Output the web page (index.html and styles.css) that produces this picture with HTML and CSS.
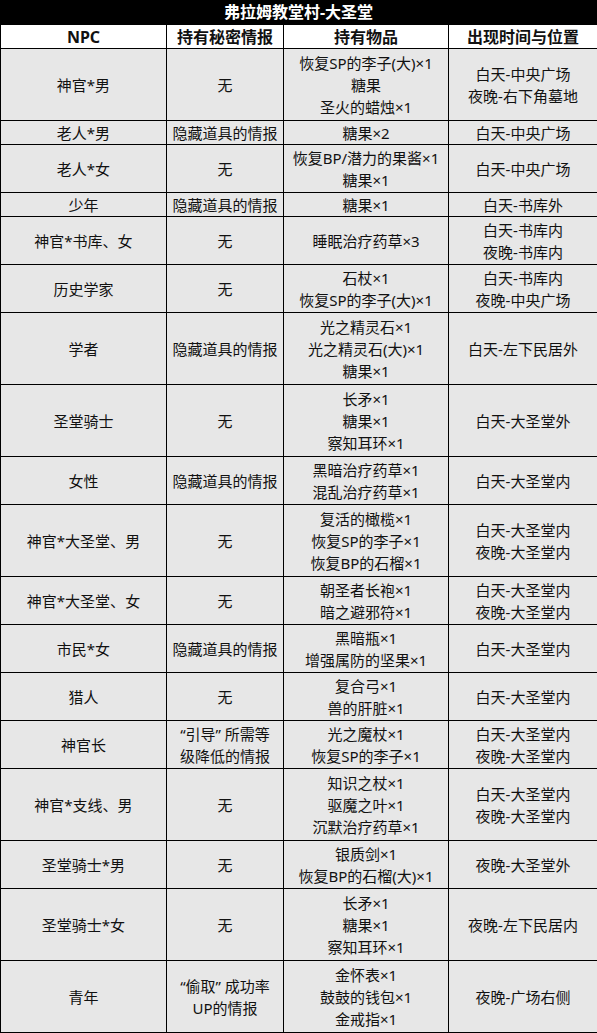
FILE: index.html
```html
<!DOCTYPE html>
<html lang="zh-CN">
<head>
<meta charset="utf-8">
<title>弗拉姆教堂村-大圣堂</title>
<link rel="stylesheet" href="styles.css">
</head>
<body>
<div class="sheet">
  <div class="title">弗拉姆教堂村-大圣堂</div>
  <table class="grid">
    <colgroup>
      <col class="c-npc">
      <col class="c-info">
      <col class="c-item">
      <col class="c-time">
    </colgroup>
    <thead>
      <tr class="head">
        <th>NPC</th><th>持有秘密情报</th><th>持有物品</th><th>出现时间与位置</th>
      </tr>
    </thead>
    <tbody>
      <tr class="r3"><td>神官*男</td><td>无</td><td>恢复SP的李子(大)×1<br>糖果<br>圣火的蜡烛×1</td><td>白天-中央广场<br>夜晚-右下角墓地</td></tr>
      <tr class="r1"><td>老人*男</td><td>隐藏道具的情报</td><td>糖果×2</td><td>白天-中央广场</td></tr>
      <tr class="r2"><td>老人*女</td><td>无</td><td>恢复BP/潜力的果酱×1<br>糖果×1</td><td>白天-中央广场</td></tr>
      <tr class="r1"><td>少年</td><td>隐藏道具的情报</td><td>糖果×1</td><td>白天-书库外</td></tr>
      <tr class="r2"><td>神官*书库、女</td><td>无</td><td>睡眠治疗药草×3</td><td>白天-书库内<br>夜晚-书库内</td></tr>
      <tr class="r2"><td>历史学家</td><td>无</td><td>石杖×1<br>恢复SP的李子(大)×1</td><td>白天-书库内<br>夜晚-中央广场</td></tr>
      <tr class="r3"><td>学者</td><td>隐藏道具的情报</td><td>光之精灵石×1<br>光之精灵石(大)×1<br>糖果×1</td><td>白天-左下民居外</td></tr>
      <tr class="r3"><td>圣堂骑士</td><td>无</td><td>长矛×1<br>糖果×1<br>察知耳环×1</td><td>白天-大圣堂外</td></tr>
      <tr class="r2"><td>女性</td><td>隐藏道具的情报</td><td>黑暗治疗药草×1<br>混乱治疗药草×1</td><td>白天-大圣堂内</td></tr>
      <tr class="r3"><td>神官*大圣堂、男</td><td>无</td><td>复活的橄榄×1<br>恢复SP的李子×1<br>恢复BP的石榴×1</td><td>白天-大圣堂内<br>夜晚-大圣堂内</td></tr>
      <tr class="r2"><td>神官*大圣堂、女</td><td>无</td><td>朝圣者长袍×1<br>暗之避邪符×1</td><td>白天-大圣堂内<br>夜晚-大圣堂内</td></tr>
      <tr class="r2"><td>市民*女</td><td>隐藏道具的情报</td><td>黑暗瓶×1<br>增强属防的坚果×1</td><td>白天-大圣堂内</td></tr>
      <tr class="r2"><td>猎人</td><td>无</td><td>复合弓×1<br>兽的肝脏×1</td><td>白天-大圣堂内</td></tr>
      <tr class="r2"><td>神官长</td><td>“引导” 所需等<br>级降低的情报</td><td>光之魔杖×1<br>恢复SP的李子×1</td><td>白天-大圣堂内<br>夜晚-大圣堂内</td></tr>
      <tr class="r3"><td>神官*支线、男</td><td>无</td><td>知识之杖×1<br>驱魔之叶×1<br>沉默治疗药草×1</td><td>白天-大圣堂内<br>夜晚-大圣堂内</td></tr>
      <tr class="r2"><td>圣堂骑士*男</td><td>无</td><td>银质剑×1<br>恢复BP的石榴(大)×1</td><td>夜晚-大圣堂外</td></tr>
      <tr class="r3"><td>圣堂骑士*女</td><td>无</td><td>长矛×1<br>糖果×1<br>察知耳环×1</td><td>夜晚-左下民居内</td></tr>
      <tr class="r3"><td>青年</td><td>“偷取” 成功率<br>UP的情报</td><td>金怀表×1<br>鼓鼓的钱包×1<br>金戒指×1</td><td>夜晚-广场右侧</td></tr>
    </tbody>
  </table>
</div>
</body>
</html>
```

FILE: styles.css
```css
html, body {
  margin: 0;
  padding: 0;
  background: #ffffff;
}

.sheet {
  width: 597px;
  font-family: "Noto Sans", "Noto Sans CJK SC", sans-serif;
  color: #111111;
}

.title {
  height: 24px;
  line-height: 24px;
  background: #000000;
  color: #ffffff;
  font-weight: 700;
  font-size: 16px;
  text-align: center;
}

.grid {
  width: 597px;
  border-collapse: collapse;
  table-layout: fixed;
}

.c-npc { width: 166px; }
.c-info { width: 117px; }
.c-item { width: 165px; }
.c-time { width: 149px; }

.grid th,
.grid td {
  border: 1px solid #000000;
  padding: 0;
  text-align: center;
  vertical-align: middle;
  white-space: nowrap;
  overflow: hidden;
}

.grid th {
  background: #ffffff;
  font-weight: 700;
  font-size: 16px;
  line-height: 22px;
}

.grid td {
  background: #e7e7e7;
  font-size: 15px;
  line-height: 22px;
}

.head { height: 24px; }
.r1 { height: 24px; }
.r2 { height: 48px; }
.r3 { height: 72px; }
```
